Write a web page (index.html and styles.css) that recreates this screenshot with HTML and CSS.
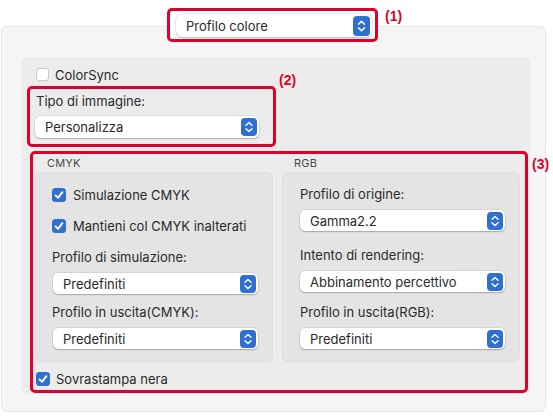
FILE: index.html
```html
<!DOCTYPE html>
<html lang="it">
<head>
<meta charset="utf-8">
<title>Profilo colore</title>
<link rel="stylesheet" href="styles.css">
</head>
<body>
<div class="page">
  <div class="head">
    <div class="mark mark-1">
      <div class="popup popup-lg">
        <span class="popup-text">Profilo colore</span>
        <svg class="stepper stepper-lg" viewBox="0 0 17 20"><rect width="17" height="20" rx="4" fill="#2f6fd2"/><path d="M5.5 8.2 8.5 5.2 11.5 8.2M5.5 11.8 8.5 14.8 11.5 11.8" fill="none" stroke="#fff" stroke-width="1.5" stroke-linecap="round" stroke-linejoin="round"/></svg>
      </div>
      <span class="tag tag-1">(1)</span>
    </div>
  </div>

  <div class="sheet">
    <div class="pane">
      <div class="check check-plain">
        <span class="box-empty"></span>
        <span>ColorSync</span>
      </div>

      <div class="mark mark-2">
        <div class="field-label">Tipo di immagine:</div>
        <div class="popup popup-type">
          <span class="popup-text">Personalizza</span>
          <svg class="stepper" viewBox="0 0 16 18"><rect width="16" height="18" rx="4" fill="#2f6fd2"/><path d="M5 7.3 8 4.5 11 7.3M5 10.7 8 13.5 11 10.7" fill="none" stroke="#fff" stroke-width="1.4" stroke-linecap="round" stroke-linejoin="round"/></svg>
        </div>
        <span class="tag tag-2">(2)</span>
      </div>

      <div class="mark mark-3">
        <div class="cols">
          <section class="group">
            <h3 class="group-title">CMYK</h3>
            <div class="group-box group-cmyk">
              <div class="check">
                <svg class="box-on" viewBox="0 0 14 14"><rect width="14" height="14" rx="3.5" fill="#2f6fd2"/><path d="M3.6 7.4 6 9.9 10.4 4.2" fill="none" stroke="#fff" stroke-width="1.9" stroke-linecap="round" stroke-linejoin="round"/></svg>
                <span>Simulazione CMYK</span>
              </div>
              <div class="check check-2">
                <svg class="box-on" viewBox="0 0 14 14"><rect width="14" height="14" rx="3.5" fill="#2f6fd2"/><path d="M3.6 7.4 6 9.9 10.4 4.2" fill="none" stroke="#fff" stroke-width="1.9" stroke-linecap="round" stroke-linejoin="round"/></svg>
                <span>Mantieni col CMYK inalterati</span>
              </div>
              <div class="field-label gap-16">Profilo di simulazione:</div>
              <div class="popup popup-col">
                <span class="popup-text">Predefiniti</span>
                <svg class="stepper" viewBox="0 0 16 18"><rect width="16" height="18" rx="4" fill="#2f6fd2"/><path d="M5 7.3 8 4.5 11 7.3M5 10.7 8 13.5 11 10.7" fill="none" stroke="#fff" stroke-width="1.4" stroke-linecap="round" stroke-linejoin="round"/></svg>
              </div>
              <div class="field-label gap-10">Profilo in uscita(CMYK):</div>
              <div class="popup popup-col">
                <span class="popup-text">Predefiniti</span>
                <svg class="stepper" viewBox="0 0 16 18"><rect width="16" height="18" rx="4" fill="#2f6fd2"/><path d="M5 7.3 8 4.5 11 7.3M5 10.7 8 13.5 11 10.7" fill="none" stroke="#fff" stroke-width="1.4" stroke-linecap="round" stroke-linejoin="round"/></svg>
              </div>
            </div>
          </section>

          <section class="group">
            <h3 class="group-title">RGB</h3>
            <div class="group-box group-rgb">
              <div class="field-label">Profilo di origine:</div>
              <div class="popup popup-col">
                <span class="popup-text">Gamma2.2</span>
                <svg class="stepper" viewBox="0 0 16 18"><rect width="16" height="18" rx="4" fill="#2f6fd2"/><path d="M5 7.3 8 4.5 11 7.3M5 10.7 8 13.5 11 10.7" fill="none" stroke="#fff" stroke-width="1.4" stroke-linecap="round" stroke-linejoin="round"/></svg>
              </div>
              <div class="field-label gap-16">Intento di rendering:</div>
              <div class="popup popup-col">
                <span class="popup-text">Abbinamento percettivo</span>
                <svg class="stepper" viewBox="0 0 16 18"><rect width="16" height="18" rx="4" fill="#2f6fd2"/><path d="M5 7.3 8 4.5 11 7.3M5 10.7 8 13.5 11 10.7" fill="none" stroke="#fff" stroke-width="1.4" stroke-linecap="round" stroke-linejoin="round"/></svg>
              </div>
              <div class="field-label gap-12">Profilo in uscita(RGB):</div>
              <div class="popup popup-col">
                <span class="popup-text">Predefiniti</span>
                <svg class="stepper" viewBox="0 0 16 18"><rect width="16" height="18" rx="4" fill="#2f6fd2"/><path d="M5 7.3 8 4.5 11 7.3M5 10.7 8 13.5 11 10.7" fill="none" stroke="#fff" stroke-width="1.4" stroke-linecap="round" stroke-linejoin="round"/></svg>
              </div>
            </div>
          </section>
        </div>

        <div class="check check-over">
          <svg class="box-on" viewBox="0 0 14 14"><rect width="14" height="14" rx="3.5" fill="#2f6fd2"/><path d="M3.6 7.4 6 9.9 10.4 4.2" fill="none" stroke="#fff" stroke-width="1.9" stroke-linecap="round" stroke-linejoin="round"/></svg>
          <span>Sovrastampa nera</span>
        </div>
        <span class="tag tag-3">(3)</span>
      </div>
    </div>
  </div>
</div>
</body>
</html>
```

FILE: styles.css
```css
* {
  box-sizing: border-box;
}

html, body {
  margin: 0;
  padding: 0;
  background: #ffffff;
}

body {
  font-family: Inter, "Liberation Sans", Arial, sans-serif;
  font-size: 13px;
  color: #2a2a2a;
}

.page {
  width: 553px;
  height: 417px;
  overflow: hidden;
}

/* ---------- annotation frames ---------- */
.mark {
  position: relative;
  border: 3px solid #e0002b;
  border-radius: 5px;
}

.tag {
  position: absolute;
  font-family: "Liberation Sans", Arial, sans-serif;
  font-weight: bold;
  font-size: 14px;
  line-height: 14px;
  color: #e0002b;
  white-space: nowrap;
}

/* ---------- header popup ---------- */
.head {
  position: relative;
  z-index: 1;
  display: flex;
  justify-content: center;
  padding: 8px 8px 0 0;
}

.mark-1 {
  width: 211px;
  height: 34px;
  padding: 3px 3px 2px 6px;
  background: #ffffff;
}

.tag-1 {
  left: 215px;
  top: -2px;
}

/* ---------- popup buttons ---------- */
.popup {
  display: flex;
  align-items: center;
  justify-content: space-between;
  height: 21px;
  padding: 0 2px 0 10px;
  background: #ffffff;
  border-radius: 5px;
  box-shadow: 0 0 0 0.5px rgba(0, 0, 0, 0.12), 0 1px 1.5px rgba(0, 0, 0, 0.22);
}

.popup-text {
  line-height: 16px;
  white-space: nowrap;
}

.popup-lg {
  width: 196px;
  height: 23px;
  padding: 0 2px 0 10px;
  border-radius: 6px;
}

.stepper {
  display: block;
  width: 16px;
  height: 18px;
  flex: none;
}

.stepper-lg {
  width: 17px;
  height: 20px;
}

/* ---------- outer sheet ---------- */
.sheet {
  margin: -16px 0 0 1px;
  width: 545px;
  height: 386px;
  padding: 30px 15px 17px 19px;
  background: #f5f5f5;
  border: 1px solid #e6e6e6;
  border-radius: 6px;
}

.pane {
  width: 509px;
  height: 337px;
  padding-top: 11px;
  background: #ececec;
  border-radius: 6px;
}

/* ---------- checkboxes ---------- */
.check {
  display: flex;
  align-items: center;
  gap: 7px;
  height: 14px;
  line-height: 16px;
  white-space: nowrap;
}

.check-plain {
  margin-left: 15px;
  height: 13px;
  gap: 6px;
}

.box-empty {
  width: 13px;
  height: 13px;
  background: #ffffff;
  border: 1px solid #c9c9c9;
  border-radius: 3px;
}

.box-on {
  width: 14px;
  height: 14px;
  display: block;
  flex: none;
}

.check-2 {
  margin-top: 17px;
}

/* ---------- image type ---------- */
.field-label {
  line-height: 16px;
  white-space: nowrap;
}

.mark-2 {
  margin: 5px 0 0 6px;
  width: 249px;
  height: 61px;
  padding: 4px 11px 0 5px;
}

.mark-2 .field-label {
  margin-left: 1px;
}

.popup-type {
  margin-top: 7px;
  width: 224px;
  height: 22px;
}

.tag-2 {
  left: 249px;
  top: -16px;
}

/* ---------- CMYK / RGB groups ---------- */
.mark-3 {
  margin: 4px 0 0 9px;
  width: 498px;
  height: 242px;
  padding: 0 0 0 2px;
}

.tag-3 {
  left: 499px;
  top: 3px;
}

.cols {
  display: grid;
  grid-template-columns: 238px 238px;
  column-gap: 9px;
}

.group-title {
  margin: 2px 0 2px 12px;
  font-size: 11px;
  font-weight: normal;
  line-height: 14px;
  color: #4a4a4a;
  letter-spacing: 0.2px;
}

.group-box {
  height: 190px;
  background: #e4e4e4;
  border: 1px solid #dedede;
  border-radius: 6px;
}

.group-cmyk {
  padding: 15px 14px 0 16px;
}

.group-rgb {
  padding: 13px 14px 0 17px;
}

.popup-col {
  margin-top: 8px;
  width: 205px;
}

.group-cmyk .popup-col {
  margin-left: 1px;
}

.gap-16 {
  margin-top: 16px;
}

.gap-12 {
  margin-top: 12px;
}

.gap-10 {
  margin-top: 10px;
}

.check-over {
  margin: 10px 0 0 1px;
  gap: 6px;
}
```
